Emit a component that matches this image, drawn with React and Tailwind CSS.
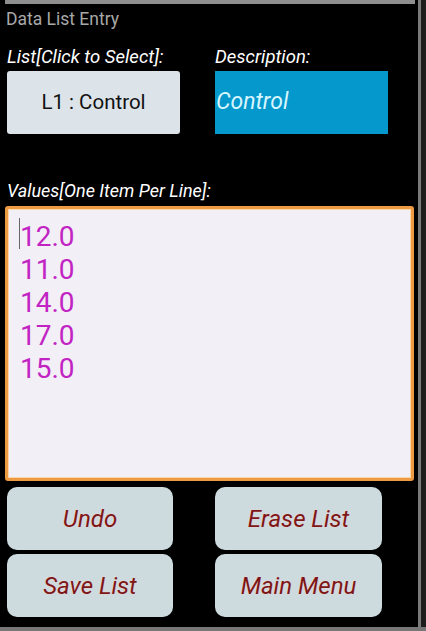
import React from 'react'

const values = ['12.0', '11.0', '14.0', '17.0', '15.0']

export default function App() {
  return (
    <div className="w-[426px] h-[631px] bg-black flex flex-col font-['Roboto',sans-serif] overflow-hidden">
      <div className="flex flex-1 min-h-0">
        <div className="w-[418px] flex flex-col">
          <div className="ml-[5px] w-[410px] h-[4px] bg-[#8e8e8e]" />

          <div className="pl-[6px] mt-[5px] text-[17.5px] leading-[20px] text-[#a8a8a8]">Data List Entry</div>

          <div className="flex mt-[18px] text-[18.5px] leading-[20px] italic text-white">
            <div className="pl-[7px] w-[215px]">List[Click to Select]:</div>
            <div>Description:</div>
          </div>

          <div className="flex mt-[4px] h-[63px]">
            <div className="ml-[7px] w-[173px] rounded-[3px] bg-[#dce3e9] flex items-center justify-center text-[20.5px] text-[#111]">
              L1 : Control
            </div>
            <div className="ml-[35px] w-[173px] bg-[#0598cc] flex items-center pl-[1px] text-[23px] italic text-[#d8f6ff]">
              Control
            </div>
          </div>

          <div className="pl-[7px] mt-[47px] text-[18px] leading-[20px] italic text-white">Values[One Item Per Line]:</div>

          <div className="ml-[5px] mt-[5px] w-[409px] h-[275px] rounded-[3px] border-[3px] border-[#ee9a42] bg-[#f3eff6] shadow-[inset_0_0_0_1px_#fbd7a8] relative pl-[12px] pt-[11px]">
            <div className="absolute left-[11px] top-[9px] w-[1px] h-[31px] bg-[#666]" />
            {values.map(v => (
              <div key={v} className="text-[28px] leading-[33px] text-[#c224c4]">{v}</div>
            ))}
          </div>

          <div className="grid grid-cols-[166px_167px] gap-x-[42px] gap-y-[4px] ml-[7px] mt-[6px]">
            <ActionButton label="Undo" />
            <ActionButton label="Erase List" />
            <ActionButton label="Save List" />
            <ActionButton label="Main Menu" />
          </div>
        </div>
        <div className="w-[3px] bg-[#7a7a7a]" />
        <div className="flex-1 bg-[#1c1c1c]" />
      </div>
      <div className="h-[4px] bg-[#777]" />
    </div>
  )
}

function ActionButton({ label }) {
  return (
    <div className="h-[63px] rounded-[10px] bg-[#cddbdf] flex items-center justify-center text-[24px] italic text-[#7d1616] [text-shadow:0_0_2px_#f4d0d0]">
      {label}
    </div>
  )
}
